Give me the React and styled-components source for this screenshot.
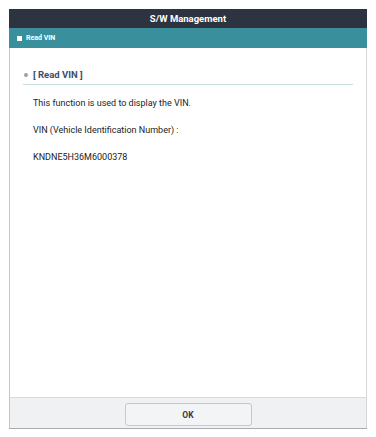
import React from "react";
import styled, { createGlobalStyle } from "styled-components";

const Global = createGlobalStyle`
  html, body { margin: 0; padding: 0; background: #ffffff; }
  body { font-family: Roboto, "Liberation Sans", Arial, sans-serif; }
  * { box-sizing: border-box; }
`;

const Page = styled.div`
  padding: 9px;
  width: 376px;
  height: 437px;
`;

const Dialog = styled.div`
  width: 358px;
  display: flex;
  flex-direction: column;
  border-bottom: 1px solid #a9acb2;
`;

const TitleBar = styled.div`
  height: 19px;
  background: #2e343f;
  color: #ffffff;
  font-weight: 700;
  font-size: 9.5px;
  display: flex;
  align-items: center;
  justify-content: center;
`;

const SubBar = styled.div`
  height: 20px;
  background: #3a8f9d;
  color: #ffffff;
  font-weight: 700;
  font-size: 7px;
  display: flex;
  align-items: center;
  gap: 4px;
  padding-left: 8px;
`;

const Square = styled.span`
  width: 5px;
  height: 5px;
  background: #ffffff;
  display: inline-block;
`;

const Body = styled.div`
  height: 349px;
  border-left: 1px solid #c4c6ca;
  border-right: 1px solid #d4d6da;
  padding: 17px 13px 0 13px;
  display: flex;
  flex-direction: column;
`;

const SectionHeader = styled.div`
  display: flex;
  align-items: center;
  gap: 5px;
  height: 20px;
  padding-left: 1px;
  border-bottom: 1px solid #c8dde0;
  color: #3c4e6a;
  font-weight: 700;
  font-size: 9.5px;
`;

const Dot = styled.span`
  width: 4px;
  height: 4px;
  border-radius: 50%;
  background: #9aa0a8;
  display: inline-block;
`;

const Text = styled.p`
  margin: ${(p) => p.$mt}px 0 0 10px;
  font-size: 9px;
  color: #222222;
  line-height: 12px;
`;

const Footer = styled.div`
  height: 31px;
  background: #f0f1f3;
  border-top: 1px solid #d6d8db;
  border-left: 1px solid #c4c6ca;
  border-right: 1px solid #d4d6da;
  display: flex;
  justify-content: center;
  padding-top: 5px;
`;

const OkButton = styled.button`
  width: 127px;
  height: 23px;
  background: #f3f4f6;
  border: 1px solid #c6c8cc;
  border-radius: 3px;
  font-family: Roboto, "Liberation Sans", Arial, sans-serif;
  font-weight: 700;
  font-size: 8.5px;
  color: #3a3a3a;
  padding: 0;
`;

export default function App() {
  return (
    <>
      <Global />
      <Page>
        <Dialog>
          <TitleBar>S/W Management</TitleBar>
          <SubBar>
            <Square />
            Read VIN
          </SubBar>
          <Body>
            <SectionHeader>
              <Dot />
              [ Read VIN ]
            </SectionHeader>
            <Text $mt={12}>This function is used to display the VIN.</Text>
            <Text $mt={15}>VIN (Vehicle Identification Number) :</Text>
            <Text $mt={15}>KNDNE5H36M6000378</Text>
          </Body>
          <Footer>
            <OkButton>OK</OkButton>
          </Footer>
        </Dialog>
      </Page>
    </>
  );
}
